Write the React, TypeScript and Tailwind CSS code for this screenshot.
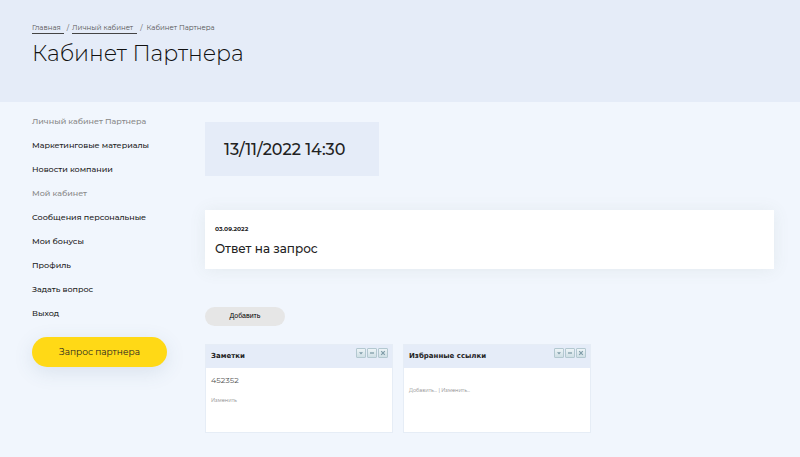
import React from 'react';

interface MenuItem {
  title: string;
  muted?: boolean;
}

const MENU: MenuItem[] = [
  { title: 'Личный кабинет Партнера', muted: true },
  { title: 'Маркетинговые материалы' },
  { title: 'Новости компании' },
  { title: 'Мой кабинет', muted: true },
  { title: 'Сообщения персональные' },
  { title: 'Мои бонусы' },
  { title: 'Профиль' },
  { title: 'Задать вопрос' },
  { title: 'Выход' },
];

interface GadgetButtonProps {
  label: string;
  children: React.ReactNode;
}

function GadgetButton({ label, children }: GadgetButtonProps) {
  return (
    <button
      type="button"
      aria-label={label}
      title={label}
      className="flex h-[10px] w-[10px] items-center justify-center rounded-[1px] border border-[#b3c8d0] bg-linear-to-b from-[#edf4f7] to-[#cfdfe5]"
    >
      <svg viewBox="0 0 8 8" className="h-[8px] w-[8px] shrink-0" fill="none" stroke="#7f9ca8">
        {children}
      </svg>
    </button>
  );
}

interface GadgetProps {
  title: string;
  children: React.ReactNode;
}

function Gadget({ title, children }: GadgetProps) {
  return (
    <section className="h-[89px] max-w-[188px] flex-1 border border-[#e6edf6] bg-white">
      <div className="flex h-[23px] items-start justify-between bg-[#e5ecf8] pr-[4px] pl-[5px]">
        <h2 className="pt-[6px] font-['DejaVu_Sans'] text-[7px] leading-[10px] font-bold text-[#222]">{title}</h2>
        <div className="flex gap-[1px] pt-[3px]">
          <GadgetButton label="Настроить">
            <path d="M2 3.2h4L4 5.4z" fill="#7f9ca8" stroke="none" />
          </GadgetButton>
          <GadgetButton label="Свернуть">
            <path d="M2 4h4" strokeWidth="1.3" />
          </GadgetButton>
          <GadgetButton label="Удалить">
            <path d="M2.2 2.2l3.6 3.6M5.8 2.2L2.2 5.8" strokeWidth="1.2" />
          </GadgetButton>
        </div>
      </div>
      <div className="px-[5px]">{children}</div>
    </section>
  );
}

export default function App() {
  return (
    <div className="min-h-screen bg-[#f1f6fd] font-[Montserrat,Inter,sans-serif] text-[#222]">
      <header className="h-[102px] bg-[#e5ecf8] px-8 pt-[23px]">
        <nav aria-label="Навигация" className="flex gap-[3px] text-[7px] leading-[10px] text-[#555]">
          <a href="#" className="border-b border-[#444] pr-[3px]">Главная</a>
          <span>/</span>
          <a href="#" className="border-b border-[#444] pr-[4px]">Личный кабинет</a>
          <span>/</span>
          <span className="ml-px">Кабинет Партнера</span>
        </nav>
        <h1 className="mt-[4px] text-[22px] leading-8 font-light text-[#111]">Кабинет Партнера</h1>
      </header>

      <div className="flex pr-[26px] pl-8">
        <aside className="w-[173px] shrink-0 pt-[13px]">
          <nav aria-label="Меню">
            <ul className="flex flex-col gap-[12px]">
              {MENU.map((item) => (
                <li key={item.title} className="flex h-[12px] items-center">
                  <a
                    href="#"
                    className={`text-[8px] leading-[12px] font-medium whitespace-nowrap ${
                      item.muted ? 'text-[#888]' : 'text-[#222]'
                    }`}
                  >
                    {item.title}
                  </a>
                </li>
              ))}
            </ul>
          </nav>
          <button
            type="button"
            className="mt-[18px] h-[30px] w-[135px] rounded-full bg-[#ffd916] text-[9px] text-[#222] shadow-[0_5px_20px_rgba(60,90,120,0.13)]"
          >
            Запрос партнера
          </button>
        </aside>

        <main className="min-w-0 flex-1 pt-5">
          <div className="h-[54px] w-[174px] bg-[#e5ecf8] px-[19px] pt-4">
            <time className="block text-[16px] leading-6 font-medium whitespace-nowrap text-[#222]">
              13/11/2022 14:30
            </time>
          </div>

          <article className="mt-[34px] bg-white px-[10px] pt-[14px] pb-[12px] shadow-[0_1px_16px_rgba(90,110,90,0.09)]">
            <time className="block text-[6px] leading-[10px] font-bold">03.09.2022</time>
            <h2 className="mt-[7px] text-[12px] leading-4 font-medium text-[#222]">Ответ на запрос</h2>
          </article>

          <button
            type="button"
            className="mt-[38px] block h-[19px] w-[80px] rounded-full bg-[#e6e6e6] font-['Liberation_Sans'] text-[7px] text-black"
          >
            Добавить
          </button>

          <div className="mt-[18px] flex gap-[10px]">
            <Gadget title="Заметки">
              <p className="pt-[6px] text-[8px] leading-[12px] text-[#555]">452352</p>
              <a href="#" className="mt-[9px] block text-[5px] leading-[10px] text-[#888]">
                Изменить
              </a>
            </Gadget>
            <Gadget title="Избранные ссылки">
              <p className="pt-[17px] text-[5px] leading-[10px] text-[#888]">
                <a href="#">Добавить...</a> | <a href="#">Изменить...</a>
              </p>
            </Gadget>
          </div>
        </main>
      </div>
    </div>
  );
}
